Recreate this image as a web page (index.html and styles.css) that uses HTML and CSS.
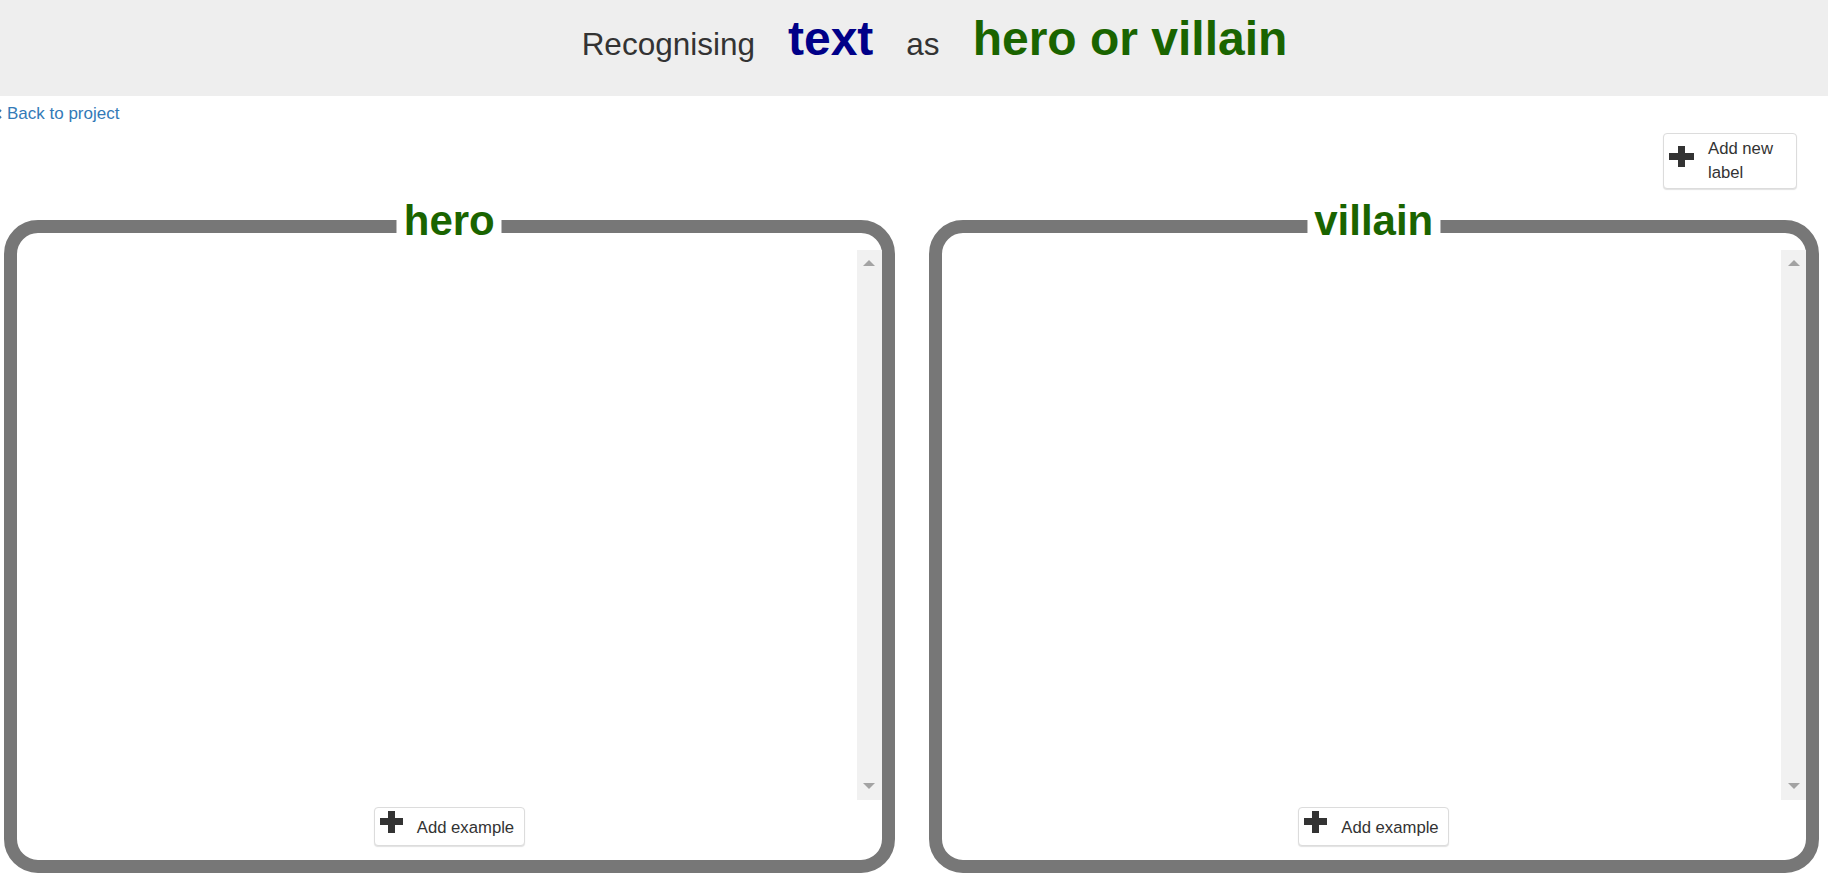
FILE: index.html
```html
<!DOCTYPE html>
<html lang="en">
<head>
<meta charset="utf-8">
<title>Recognising text as hero or villain</title>
<link rel="stylesheet" href="styles.css">
</head>
<body>
<header class="title-bar">
  <span class="title-plain">Recognising</span>
  <span class="title-type">text</span>
  <span class="title-plain">as</span>
  <span class="title-labels">hero or villain</span>
</header>

<a class="back-link" href="#">
  <svg class="chev" width="8" height="10" viewBox="0 0 8 10"><path d="M6 1 L2 5 L6 9" fill="none" stroke="#337ab7" stroke-width="2"/></svg>Back to project
</a>

<div class="toolbar">
  <button class="btn btn-label">
    <svg class="plus plus-lg" width="25" height="21" viewBox="0 0 25 21"><rect x="0" y="7" width="25" height="7" fill="#333"/><rect x="9" y="0" width="7" height="21" fill="#333"/></svg>
    <span class="btn-label-text">Add new label</span>
  </button>
</div>

<main class="buckets">
  <section class="bucket">
    <h2 class="bucket-name">hero</h2>
    <div class="bucket-scroll">
      <div class="bucket-items"></div>
      <div class="scrollbar"><span class="arrow-up"></span><span class="arrow-down"></span></div>
    </div>
    <button class="btn btn-example">
      <svg class="plus plus-sm" width="23" height="22" viewBox="0 0 23 22"><rect x="0" y="7" width="23" height="7" fill="#333"/><rect x="8" y="0" width="7" height="22" fill="#333"/></svg>
      <span class="btn-example-text">Add example</span>
    </button>
  </section>
  <section class="bucket">
    <h2 class="bucket-name">villain</h2>
    <div class="bucket-scroll">
      <div class="bucket-items"></div>
      <div class="scrollbar"><span class="arrow-up"></span><span class="arrow-down"></span></div>
    </div>
    <button class="btn btn-example">
      <svg class="plus plus-sm" width="23" height="22" viewBox="0 0 23 22"><rect x="0" y="7" width="23" height="7" fill="#333"/><rect x="8" y="0" width="7" height="22" fill="#333"/></svg>
      <span class="btn-example-text">Add example</span>
    </button>
  </section>
</main>
</body>
</html>
```

FILE: styles.css
```css
html, body {
  margin: 0;
  padding: 0;
  height: 880px;
  overflow: hidden;
  background: #fff;
  font-family: "Liberation Sans", Arial, sans-serif;
  color: #333;
}

.title-bar {
  box-sizing: border-box;
  height: 96px;
  background: #eeeeee;
  display: flex;
  justify-content: center;
  align-items: baseline;
  gap: 33px;
  padding-top: 15px;
  padding-left: 41px;
  line-height: 48px;
}

.title-plain {
  font-size: 31.5px;
  color: #333;
}

.title-type {
  font-size: 48px;
  font-weight: bold;
  color: #000088;
}

.title-labels {
  font-size: 48px;
  font-weight: bold;
  color: #1a6400;
}

.back-link {
  display: block;
  margin-top: 6px;
  line-height: 24px;
  font-size: 17px;
  color: #337ab7;
  text-decoration: none;
  width: max-content;
}

.chev {
  margin-left: -5px;
  margin-right: 4px;
  vertical-align: 0px;
}

.toolbar {
  display: flex;
  justify-content: flex-end;
  margin-top: 7px;
  padding-right: 31px;
}

.btn {
  display: flex;
  align-items: flex-start;
  gap: 14px;
  box-sizing: border-box;
  background: #fff;
  border: 1px solid #dcdcdc;
  border-radius: 4px;
  box-shadow: 0 1px 1px rgba(0, 0, 0, 0.12);
  font-family: "Liberation Sans", Arial, sans-serif;
  font-size: 16.7px;
  line-height: 24px;
  color: #333;
  text-align: left;
  cursor: pointer;
}

.btn-label {
  width: 134px;
  height: 56px;
  padding: 3px 18px 3px 5px;
}

.btn-label .plus-lg {
  margin-top: 9px;
  flex: none;
}

.btn-label-text {
  width: 70px;
}

.buckets {
  display: flex;
  gap: 34px;
  padding: 0 9px 0 4px;
  margin-top: 31px;
}

.bucket {
  position: relative;
  flex: 1;
  box-sizing: border-box;
  height: 653px;
  border: 13px solid #777777;
  border-radius: 34px;
  padding: 17px 0 14px 0;
  display: flex;
  flex-direction: column;
  align-items: center;
  gap: 7px;
}

.bucket-name {
  position: absolute;
  top: -33px;
  left: 50%;
  transform: translateX(-50%);
  margin: 0;
  padding: 0 7px;
  background: #fff;
  font-size: 42px;
  line-height: 42px;
  font-weight: bold;
  color: #1a6400;
  white-space: nowrap;
}

.bucket-scroll {
  align-self: stretch;
  height: 550px;
  display: flex;
}

.bucket-items {
  flex: 1;
}

.scrollbar {
  width: 25px;
  background: #f1f1f1;
  display: flex;
  flex-direction: column;
  justify-content: space-between;
  align-items: center;
  padding: 10px 0 11px;
  box-sizing: border-box;
}

.arrow-up {
  width: 0;
  height: 0;
  border-left: 6px solid transparent;
  border-right: 6px solid transparent;
  border-bottom: 6px solid #a3a3a3;
}

.arrow-down {
  width: 0;
  height: 0;
  border-left: 6px solid transparent;
  border-right: 6px solid transparent;
  border-top: 6px solid #a3a3a3;
}

.btn-example {
  width: 151px;
  height: 39px;
  padding: 8px 6px 5px 5px;
}

.btn-example .plus-sm {
  margin-top: -5px;
  flex: none;
}

.btn-example-text {
  white-space: nowrap;
}
```
